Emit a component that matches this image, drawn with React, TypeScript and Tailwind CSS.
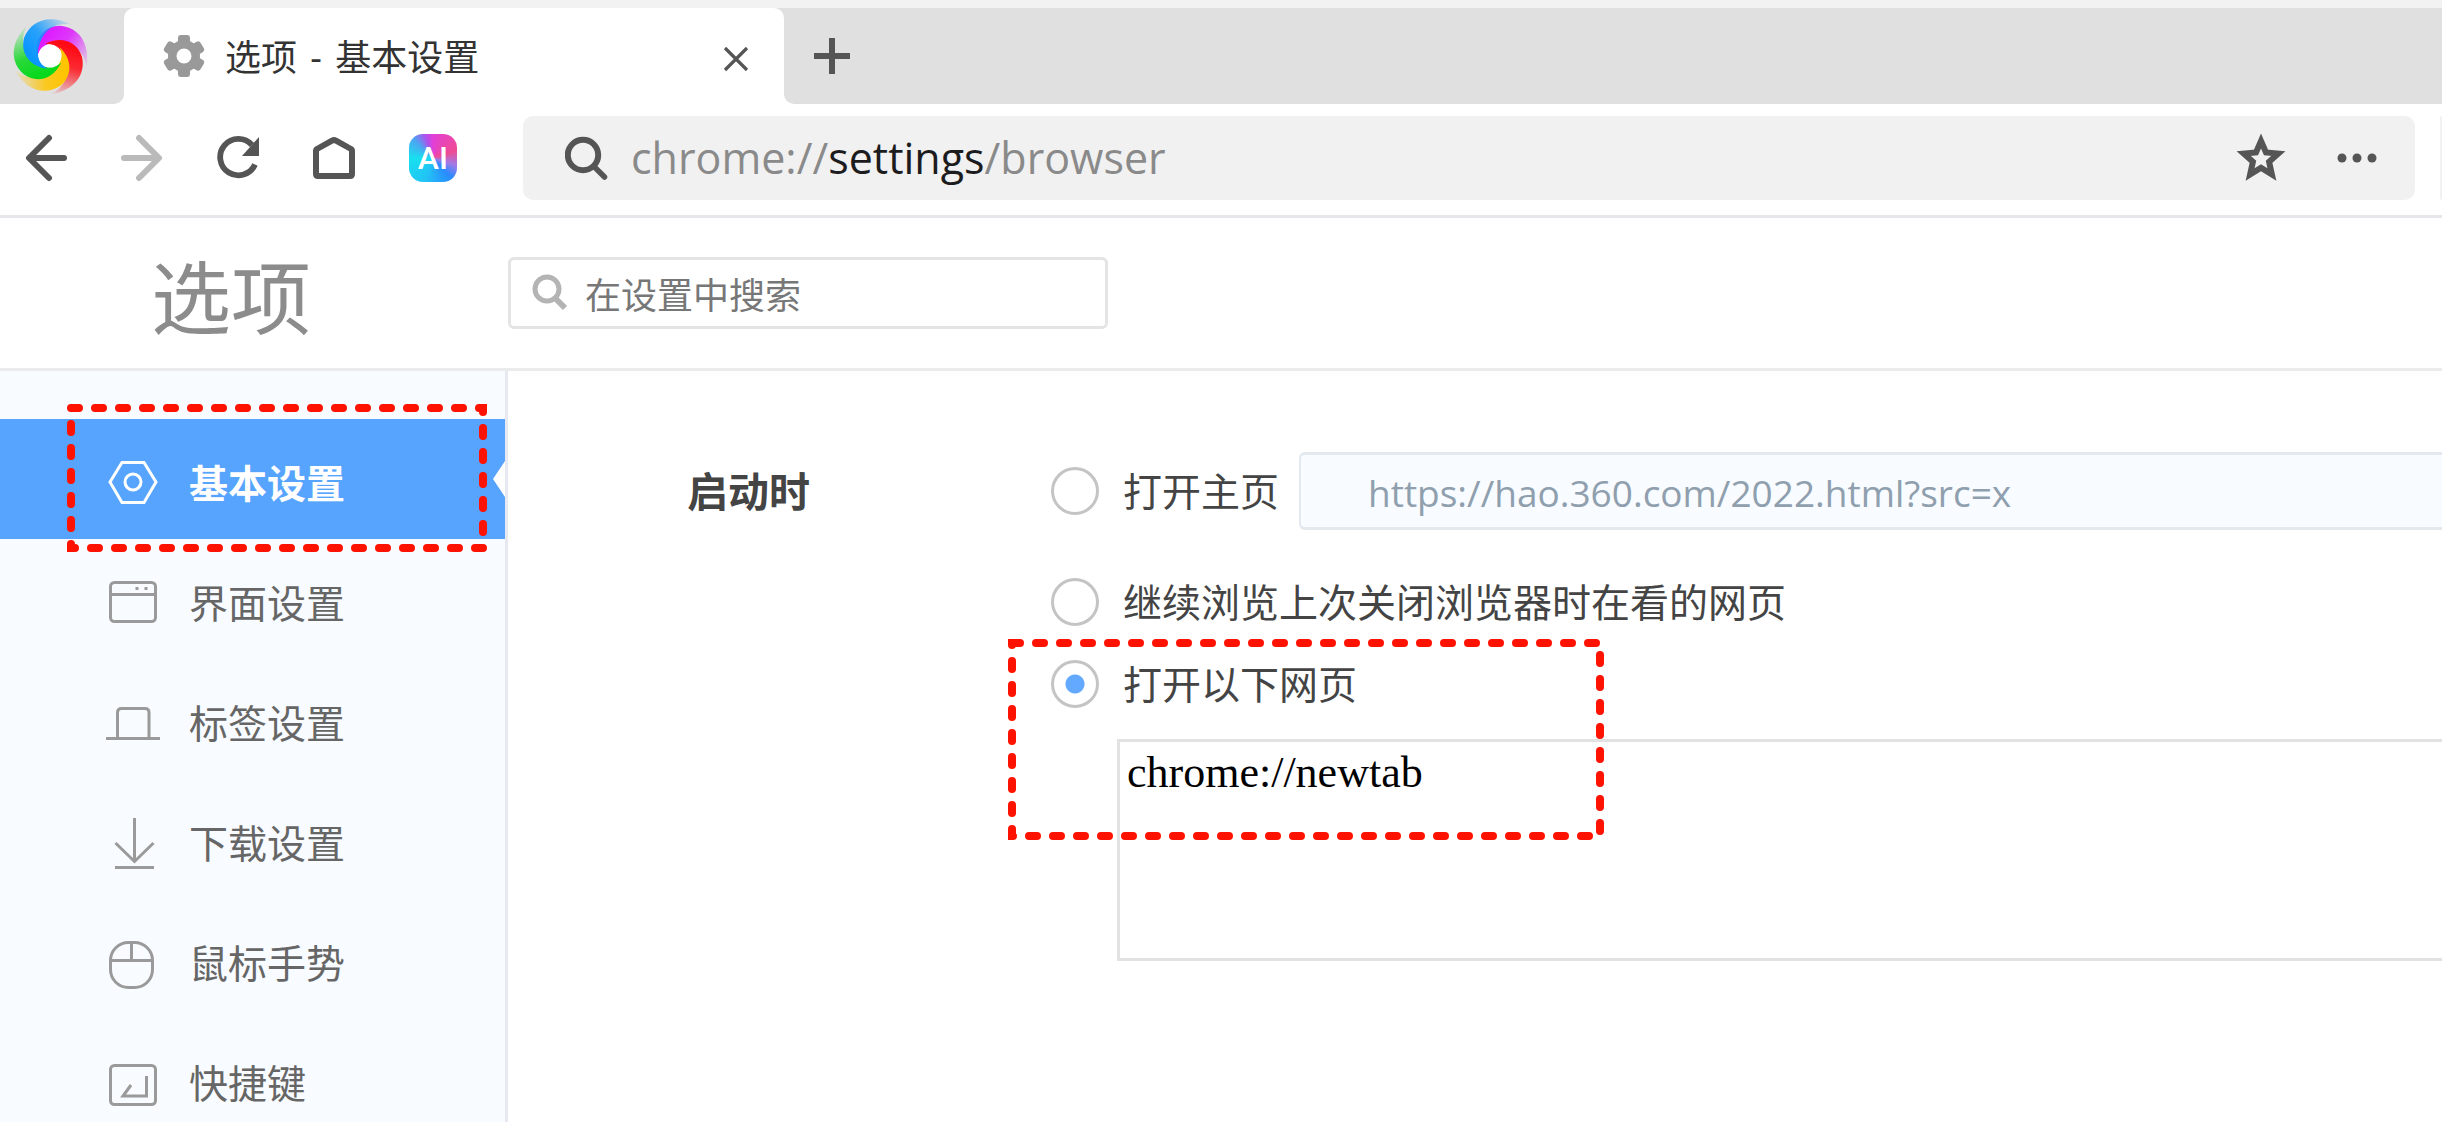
import React, { useState } from "react";

const UI_FONT = "font-['Open_Sans','Noto_Sans_CJK_SC',sans-serif]";

function BrowserLogo() {
  const petals = [
    { id: "magenta", color: "#dd1bff", turn: 0 },
    { id: "red", color: "#ff0a14", turn: 72 },
    { id: "yellow", color: "#ffc400", turn: 144 },
    { id: "green", color: "#08d81c", turn: 216 },
    { id: "blue", color: "#0a96ff", turn: 288 },
  ];
  return (
    <svg className="h-[82px] w-[82px]" viewBox="-114 -114 228 228" aria-hidden="true">
      <defs>
        {petals.map((p) => (
          <linearGradient key={p.id} id={p.id} gradientUnits="userSpaceOnUse" x1="-10" y1="-60" x2="108" y2="20">
            <stop offset="0" stopColor={p.color} />
            <stop offset="0.4" stopColor={p.color} stopOpacity="0.85" />
            <stop offset="1" stopColor={p.color} stopOpacity="0.08" />
          </linearGradient>
        ))}
      </defs>
      <circle r="50" fill="#fff" />
      {petals.map((p) => (
        <path
          key={p.id}
          transform={`rotate(${p.turn})`}
          fill={`url(#${p.id})`}
          d="M-36 4C-46-48-14-84 28-84C78-80 112-38 102 30C94-14 66-36 26-38C-4-40-28-26-36 4Z"
        />
      ))}
      <circle r="32" fill="#fff" />
    </svg>
  );
}

function GearIcon() {
  return (
    <svg className="h-[42px] w-[42px]" viewBox="0 0 42 42" aria-hidden="true">
      <g fill="#999">
        <rect x="15" y="0" width="12" height="42" rx="3" />
        <rect x="15" y="0" width="12" height="42" rx="3" transform="rotate(60 21 21)" />
        <rect x="15" y="0" width="12" height="42" rx="3" transform="rotate(120 21 21)" />
        <circle cx="21" cy="21" r="16" />
      </g>
      <circle cx="21" cy="21" r="7.5" fill="#fff" />
    </svg>
  );
}

function TabStrip() {
  return (
    <header className="border-t-8 border-[#f2f2f2] bg-white">
      <div className="flex h-24">
        <button aria-label="浏览器菜单" className="flex w-[124px] items-center rounded-br-[10px] bg-[#e0e0e0] pl-[9px]">
          <BrowserLogo />
        </button>
        <div className="flex bg-[#e0e0e0]">
          <div className="flex w-[660px] items-center rounded-t-[10px] bg-white pl-[39px] pr-[34px]">
            <GearIcon />
            <span className="ml-[20px] flex-1 pt-1 text-[36px] leading-[48px] text-[#333]">
              选项 <span className="mx-1">-</span> 基本设置
            </span>
            <button aria-label="关闭标签页" className="pt-[6px]">
              <svg className="h-[28px] w-[28px]" viewBox="0 0 28 28" fill="none" stroke="#555" strokeWidth="3.2" aria-hidden="true">
                <path d="M3 3L25 25M25 3L3 25" />
              </svg>
            </button>
          </div>
        </div>
        <div className="flex flex-1 items-center rounded-bl-[10px] bg-[#e0e0e0] pl-[30px]">
          <button aria-label="新建标签页">
            <svg className="h-[36px] w-[36px]" viewBox="0 0 36 36" fill="none" stroke="#555" strokeWidth="6" aria-hidden="true">
              <path d="M18 0V36M0 18H36" />
            </svg>
          </button>
        </div>
      </div>
    </header>
  );
}

function ArrowIcon({ flipped = false }: { flipped?: boolean }) {
  return (
    <svg
      className={flipped ? "h-12 w-12 -scale-x-100 text-[#bababa]" : "h-12 w-12 text-[#555]"}
      viewBox="0 0 48 48"
      fill="none"
      stroke="currentColor"
      strokeWidth="6"
      strokeLinecap="round"
      strokeLinejoin="round"
      aria-hidden="true"
    >
      <path d="M27 4L7 24L27 44M8 24H42" />
    </svg>
  );
}

function Toolbar() {
  return (
    <div className="flex h-[114px] items-center border-b-[3px] border-[#e6e7ea] bg-white pb-[3px] pl-[22px]">
      <div className="flex items-center gap-12">
        <button aria-label="后退">
          <ArrowIcon />
        </button>
        <button aria-label="前进">
          <ArrowIcon flipped />
        </button>
        <button aria-label="刷新">
          <svg className="h-12 w-12" viewBox="0 0 48 48" fill="none" aria-hidden="true">
            <path d="M41 30.500A18.200 18.200 0 1 1 38 11" stroke="#555" strokeWidth="5.8" />
            <path d="M45 3V22H28Z" fill="#555" />
          </svg>
        </button>
        <button aria-label="主页">
          <svg className="h-12 w-12" viewBox="0 0 48 48" fill="none" stroke="#555" strokeWidth="6" strokeLinejoin="round" aria-hidden="true">
            <path d="M6 16.500Q6 15.500 7 15L22 6.700Q24 5.500 26 6.700L41 15Q42 15.500 42 16.500V40Q42 42 40 42H8Q6 42 6 40Z" />
          </svg>
        </button>
        <button
          aria-label="AI 助手"
          className="ml-[3px] flex h-12 w-12 items-center justify-center rounded-[14px] bg-[conic-gradient(from_0deg,#e23fd8,#ef4b93_20%,#a07be8_30%,#2a8bff_38%,#22c3f5_55%,#17e0ee_75%,#4aa8f2_87%,#b050ea_95%,#e23fd8)] text-[32px] leading-[48px] font-medium text-white font-['Roboto',sans-serif]"
        >
          AI
        </button>
      </div>
      <div className="ml-[66px] flex h-[84px] flex-1 items-center rounded-[10px] bg-[#f1f1f1] pl-[42px] pr-[37px]">
        <svg className="h-11 w-11" viewBox="0 0 44 44" fill="none" stroke="#555" aria-hidden="true">
          <circle cx="18" cy="19" r="15.200" strokeWidth="6" />
          <path d="M29.500 31L39.500 41" strokeWidth="5.500" strokeLinecap="round" />
        </svg>
        <a href="chrome://settings/browser" className="ml-[22px] flex-1 text-[43px] leading-[60px] text-[#8a8a8a]">
          chrome://<span className="text-[#1c1c1e]">settings</span>/browser
        </a>
        <button aria-label="收藏">
          <svg className="h-[50px] w-[50px]" viewBox="0 0 50 50" fill="none" stroke="#555" strokeWidth="6" aria-hidden="true">
            <path d="M25 8L30 19.400L42.300 20.600L33.100 28.800L35.900 41.500L25 34.700L14.100 41.500L16.900 28.800L7.700 20.600L20 19.400Z" />
          </svg>
        </button>
        <button aria-label="更多" className="ml-[50px]">
          <svg className="h-[10px] w-[42px]" viewBox="0 0 42 10" fill="#555" aria-hidden="true">
            <circle cx="6" cy="5" r="4.500" />
            <circle cx="21" cy="5" r="4.500" />
            <circle cx="36" cy="5" r="4.500" />
          </svg>
        </button>
      </div>
      <div className="ml-[25px] h-[84px] w-[2px] rounded-l bg-[#f1f1f1]" />
    </div>
  );
}

const NAV_ITEMS: { label: string; icon: React.ReactNode }[] = [
  {
    label: "基本设置",
    icon: (
      <>
        <path d="M17 8.500H39L51 28L39 48.500H17L5 28Z" />
        <circle cx="28" cy="28" r="8" />
      </>
    ),
  },
  {
    label: "界面设置",
    icon: (
      <>
        <rect x="5.500" y="8.500" width="45" height="39" rx="4" />
        <path d="M5.500 20.500H50.500M30.500 14.500H33.500M39.500 14.500H42.500" />
      </>
    ),
  },
  { label: "标签设置", icon: <path d="M1 44.500H55M12.500 44V18.500Q12.500 14.500 16.500 14.500H40Q44 14.500 44 18.500V44" /> },
  { label: "下载设置", icon: <path d="M29.500 4V47M10.500 29L29.500 47.500L48.500 29M10 53.500H49" /> },
  {
    label: "鼠标手势",
    icon: (
      <>
        <rect x="5.500" y="8.500" width="42" height="45" rx="18" />
        <path d="M5.500 26.500H47.500M26.500 8.500V26.500" />
      </>
    ),
  },
  {
    label: "快捷键",
    icon: (
      <>
        <rect x="5.500" y="11.500" width="45" height="39" rx="4" />
        <path d="M41.500 22V42H18L26 31" />
      </>
    ),
  },
];

function Sidebar() {
  const [active, setActive] = useState(0);
  return (
    <nav aria-label="设置分类" className="w-[508px] shrink-0 border-r-[3px] border-[#e6e9f0] bg-[#f8fbff] pt-12">
      {NAV_ITEMS.map((item, i) => (
        <div key={item.label} className="relative">
          <button
            onClick={() => setActive(i)}
            className={
              i === active
                ? "flex h-[120px] w-full items-center overflow-hidden bg-[#57a4ff] pt-[6px] pl-[105px] text-[39px] leading-[52px] font-bold text-white"
                : "flex h-[120px] w-full items-center pt-[6px] pl-[105px] text-[39px] leading-[52px] text-[#666]"
            }
          >
            <svg
              className={i === active ? "h-14 w-14 text-white" : "h-14 w-14 text-[#9a9a9a]"}
              viewBox="0 0 56 56"
              fill="none"
              stroke="currentColor"
              strokeWidth="3"
              aria-hidden="true"
            >
              {item.icon}
            </svg>
            <span className="ml-[28px] pt-[2px]">{item.label}</span>
          </button>
          {i === active && (
            <svg className="absolute top-[42px] right-0 h-9 w-3" viewBox="0 0 12 36" aria-hidden="true">
              <path d="M12 0V36L0 18Z" fill="#fff" />
            </svg>
          )}
          {i === 0 && (
            <svg className="pointer-events-none absolute -top-[15px] left-[67px] z-10 h-[148px] w-[420px]" viewBox="0 0 420 148" fill="none" aria-hidden="true">
              <rect x="4" y="4" width="412" height="140" stroke="#ff1200" strokeWidth="8" strokeLinecap="round" strokeDasharray="8 16" />
            </svg>
          )}
        </div>
      ))}
    </nav>
  );
}

const RADIO =
  "h-12 w-12 shrink-0 appearance-none rounded-full border-[3px] border-[#c4c4c4] bg-white checked:bg-[radial-gradient(circle,#63a9ff_9px,white_10px)]";
const RADIO_LABEL = "flex items-center gap-6 text-[39px] leading-[52px] text-[#444]";

function StartupSettings() {
  const [choice, setChoice] = useState("pages");
  return (
    <section className="flex flex-1 pl-[179px]">
      <h2 className="w-[364px] shrink-0 pt-[90px] text-[41px] leading-[60px] font-bold text-[#444]">启动时</h2>
      <div role="radiogroup" aria-label="启动时" className="flex flex-1 flex-col pt-[81px]">
        <div className="flex items-center">
          <label className={RADIO_LABEL}>
            <input type="radio" name="startup" className={RADIO} checked={choice === "home"} onChange={() => setChoice("home")} />
            打开主页
          </label>
          <input
            type="text"
            aria-label="主页地址"
            defaultValue="https://hao.360.com/2022.html?src=x"
            className="ml-[20px] h-[78px] min-w-0 flex-1 rounded-l-[6px] border-y-[3px] border-l-2 border-[#e3e9ee] bg-[#f8fbff] pt-[2px] pl-[67px] text-[37px] leading-[52px] text-[#8f9fae]"
          />
        </div>
        <label className={`${RADIO_LABEL} mt-[46px]`}>
          <input type="radio" name="startup" className={RADIO} checked={choice === "resume"} onChange={() => setChoice("resume")} />
          继续浏览上次关闭浏览器时在看的网页
        </label>
        <div className="relative mt-[30px] flex flex-col">
          <label className={RADIO_LABEL}>
            <input type="radio" name="startup" className={RADIO} checked={choice === "pages"} onChange={() => setChoice("pages")} />
            打开以下网页
          </label>
          <textarea
            aria-label="启动网页列表"
            defaultValue="chrome://newtab"
            className="mt-[29px] ml-[66px] h-[222px] resize-none border-y-[3px] border-l-[3px] border-[#e2e2e2] bg-white px-[7px] pt-[5px] text-[44px] leading-[52px] text-black font-['Liberation_Serif',serif]"
          />
          <svg className="pointer-events-none absolute -top-[19px] -left-[43px] h-[201px] w-[596px]" viewBox="0 0 596 201" fill="none" aria-hidden="true">
            <rect x="4" y="4" width="588" height="193" stroke="#ff1200" strokeWidth="8" strokeLinecap="round" strokeDasharray="8 16" />
          </svg>
        </div>
      </div>
    </section>
  );
}

export default function App() {
  return (
    <div className={`flex h-screen flex-col overflow-hidden bg-white ${UI_FONT}`}>
      <TabStrip />
      <Toolbar />
      <div className="flex h-[153px] shrink-0 items-center border-b-[3px] border-[#ebebeb]">
        <h1 className="w-[508px] shrink-0 pt-2 pl-[151px] text-[80px] leading-[96px] text-[#8c8c8c]">选项</h1>
        <label className="flex h-[72px] w-[600px] items-center rounded-[6px] border-[3px] border-[#e4e4e4] bg-white pl-[20px]">
          <svg className="h-[38px] w-[38px]" viewBox="0 0 38 38" fill="none" stroke="#b4b4b4" aria-hidden="true">
            <circle cx="16" cy="15" r="12" strokeWidth="5" />
            <path d="M25 25L34 34" strokeWidth="6" />
          </svg>
          <input
            type="text"
            aria-label="在设置中搜索"
            placeholder="在设置中搜索"
            className="ml-[16px] min-w-0 flex-1 pt-[6px] text-[36px] leading-[48px] text-[#333] outline-none placeholder:text-[#777]"
          />
        </label>
      </div>
      <main className="flex min-h-0 flex-1">
        <Sidebar />
        <StartupSettings />
      </main>
    </div>
  );
}
